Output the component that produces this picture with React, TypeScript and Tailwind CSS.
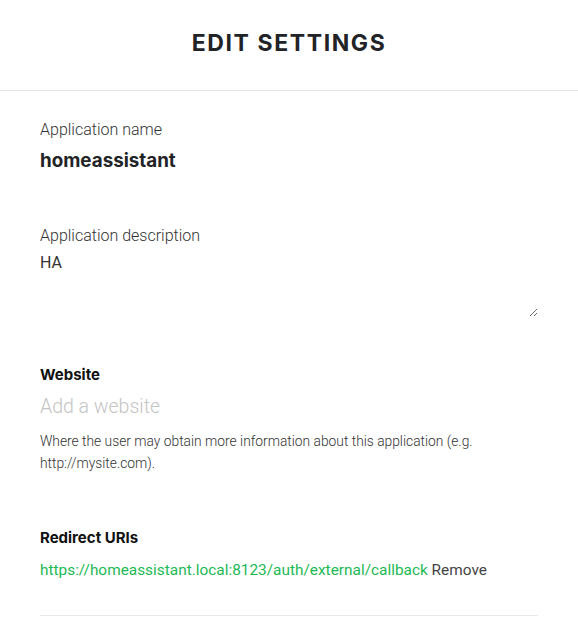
import React from 'react';

export default function App() {
  return (
    <div className="w-[578px] h-[625px] bg-white overflow-hidden font-['Roboto',sans-serif] text-[#333]">
      <div className="h-[91px] border-b border-[#e5e5e5] flex items-center justify-center">
        <h1 className="font-['Inter',sans-serif] font-bold text-[23px] tracking-[1.6px] text-[#222326] -mt-[4px]">
          EDIT SETTINGS
        </h1>
      </div>
      <div className="px-[40px] pt-[28px]">
        <label className="block text-[16px] font-light leading-[22px] text-[#333]">Application name</label>
        <div className="mt-[9px] font-['Inter',sans-serif] font-bold text-[18.8px] leading-[22px] text-[#222326]">homeassistant</div>

        <label className="block mt-[53px] text-[16px] font-light leading-[22px] text-[#333]">Application description</label>
        <textarea
          className="block mt-[5px] w-full h-[65px] text-[16px] leading-[22px] text-[#333] outline-none resize-y p-0 border-0"
          defaultValue="HA"
        />

        <label className="block mt-[47px] font-['Inter',sans-serif] font-bold text-[15px] leading-[22px] text-[#111]">Website</label>
        <input
          className="block mt-[10px] w-full text-[19.5px] font-light leading-[22px] placeholder-[#c4c4c4] outline-none p-0 border-0"
          placeholder="Add a website"
        />
        <p className="mt-[12px] text-[13.8px] font-light leading-[22px] text-[#333]">
          Where the user may obtain more information about this application (e.g. http://mysite.com).
        </p>

        <label className="block mt-[53px] font-['Inter',sans-serif] font-bold text-[15px] leading-[22px] text-[#111]">Redirect URIs</label>
        <div className="mt-[10px] text-[15.4px] leading-[22px]">
          <span className="text-[#1db954]">https://homeassistant.local:8123/auth/external/callback</span>{' '}
          <span className="text-[#444]">Remove</span>
        </div>
        <div className="mt-[34px] border-b border-[#e8e8e8]" />
      </div>
    </div>
  );
}
